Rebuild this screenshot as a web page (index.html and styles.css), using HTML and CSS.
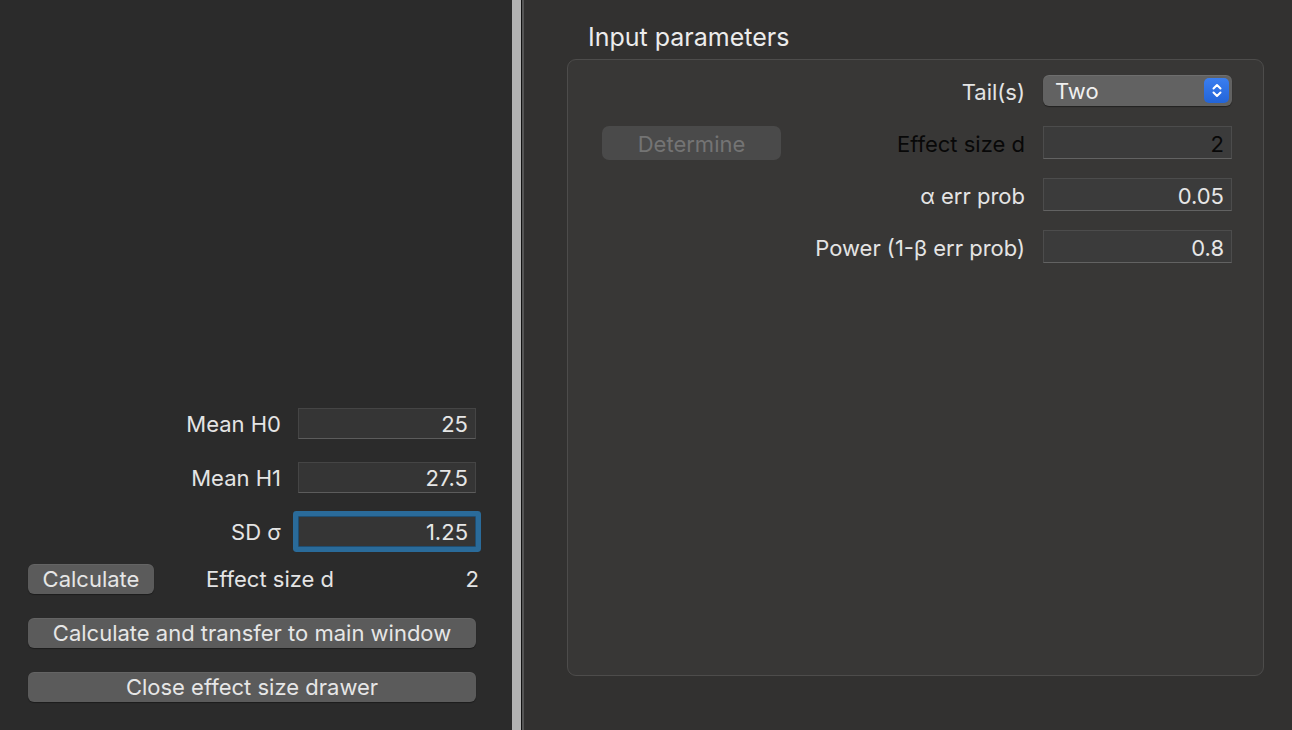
FILE: index.html
```html
<!DOCTYPE html>
<html>
<head>
<meta charset="utf-8">
<link rel="stylesheet" href="styles.css">
</head>
<body>
<div class="app">
  <aside class="drawer">
    <div class="form">
      <label class="lbl">Mean H0</label>
      <div class="field">25</div>
      <label class="lbl">Mean H1</label>
      <div class="field">27.5</div>
      <label class="lbl">SD σ</label>
      <div class="field focus">1.25</div>
    </div>
    <div class="calc-row">
      <button class="btn btn-calc">Calculate</button>
      <span class="calc-label">Effect size d</span>
      <span class="calc-value">2</span>
    </div>
    <button class="btn btn-wide">Calculate and transfer to main window</button>
    <button class="btn btn-wide">Close effect size drawer</button>
  </aside>
  <div class="divider">
    <div class="div-light"></div>
    <div class="div-dark"></div>
    <div class="div-mid"></div>
  </div>
  <main class="main">
    <h2 class="title">Input parameters</h2>
    <section class="group">
      <div class="grid">
        <div></div>
        <label class="rlbl">Tail(s)</label>
        <div class="popup">
          <span>Two</span>
          <span class="stepper">
            <svg width="12" height="17" viewBox="0 0 12 17"><path d="M2.5 6.5 L6 3 L9.5 6.5 M2.5 10.5 L6 14 L9.5 10.5" fill="none" stroke="#fff" stroke-width="2" stroke-linecap="round" stroke-linejoin="round"/></svg>
          </span>
        </div>

        <button class="btn-determine">Determine</button>
        <label class="rlbl dark">Effect size d</label>
        <div class="field rfield dark">2</div>

        <div></div>
        <label class="rlbl">α err prob</label>
        <div class="field rfield">0.05</div>

        <div></div>
        <label class="rlbl">Power (1-β err prob)</label>
        <div class="field rfield">0.8</div>
      </div>
    </section>
  </main>
</div>
</body>
</html>
```

FILE: styles.css
```css
* { box-sizing: border-box; }
html, body {
  margin: 0;
  padding: 0;
  width: 1292px;
  height: 730px;
  overflow: hidden;
  background: #323130;
  font-family: "Inter", "Noto Sans", sans-serif;
  font-size: 22px;
  color: #e2e2e2;
}
.app {
  display: flex;
  height: 730px;
}
.drawer {
  width: 512px;
  flex: none;
  background: #2b2b2b;
  display: flex;
  flex-direction: column;
  justify-content: flex-end;
  padding: 0 0 28px 28px;
}
.form {
  display: grid;
  grid-template-columns: 253px 178px;
  column-gap: 17px;
  row-gap: 23px;
  align-items: center;
}
.lbl {
  text-align: right;
  color: #e4e4e4;
  padding-top: 1px;
}
.field {
  height: 31px;
  background: #353535;
  border: 1px solid #454545;
  border-bottom-color: #5c5c5c;
  text-align: right;
  padding: 1px 7px 0;
  line-height: 29px;
  color: #e6e6e6;
}
.field.focus {
  border-color: #1f4e72;
  box-shadow: 0 0 0 5px #2a6b9a;
  border-radius: 1px;
}
.calc-row {
  display: flex;
  align-items: center;
  margin-top: 17px;
  height: 30px;
  width: 451px;
}
.btn {
  font-family: inherit;
  font-size: 22px;
  color: #e6e6e6;
  background: #5b5b5b;
  border: none;
  border-radius: 6px;
  height: 30px;
  padding: 0;
  box-shadow: 0 1px 1px rgba(0,0,0,0.35), inset 0 1px 0 rgba(255,255,255,0.06);
}
.btn-calc {
  width: 126px;
}
.calc-label {
  margin-left: 52px;
  color: #e4e4e4;
}
.calc-value {
  margin-left: auto;
  color: #e4e4e4;
}
.btn-wide {
  width: 448px;
  margin-top: 24px;
}
.divider {
  display: flex;
  flex: none;
}
.div-light { width: 9px; background: #b2b2b2; }
.div-dark { width: 1px; background: #121212; }
.div-mid { width: 2px; background: #555; }
.main {
  flex: 1;
  padding: 0 28px 54px 43px;
  display: flex;
  flex-direction: column;
}
.title {
  margin: 23px 0 8px 21px;
  font-size: 25px;
  font-weight: 400;
  line-height: 28px;
  color: #ececec;
}
.group {
  flex: 1;
  background: #383736;
  border: 1px solid #4d4c4b;
  border-radius: 9px;
}
.grid {
  display: grid;
  grid-template-columns: 179px 1fr 189px;
  grid-template-rows: 33px 33px 33px 33px;
  column-gap: 18px;
  row-gap: 19px;
  align-items: center;
  padding: 14px 31px 0 34px;
}
.rlbl {
  text-align: right;
  color: #e4e4e4;
  padding-top: 2px;
}
.rlbl.dark { color: #080808; }
.rfield {
  height: 33px;
  line-height: 31px;
  padding-top: 2px;
  background: #3b3b3b;
  border-color: #4c4c4c;
  border-bottom-color: #626262;
}
.rfield.dark { color: #080808; }
.popup {
  height: 31px;
  background: #626262;
  border-radius: 6px;
  display: flex;
  align-items: center;
  justify-content: space-between;
  padding: 0 3px 0 12px;
  color: #f0f0f0;
  box-shadow: 0 1px 1px rgba(0,0,0,0.4), inset 0 1px 0 rgba(255,255,255,0.08);
}
.stepper {
  width: 25px;
  height: 25px;
  border-radius: 5px;
  background: linear-gradient(#3a7ef0, #2264d8);
  display: flex;
  align-items: center;
  justify-content: center;
}
.btn-determine {
  font-family: inherit;
  font-size: 22px;
  height: 34px;
  width: 179px;
  border: none;
  border-radius: 7px;
  background: #4a4a4a;
  color: #747474;
  padding: 2px 0 0;
}
```
